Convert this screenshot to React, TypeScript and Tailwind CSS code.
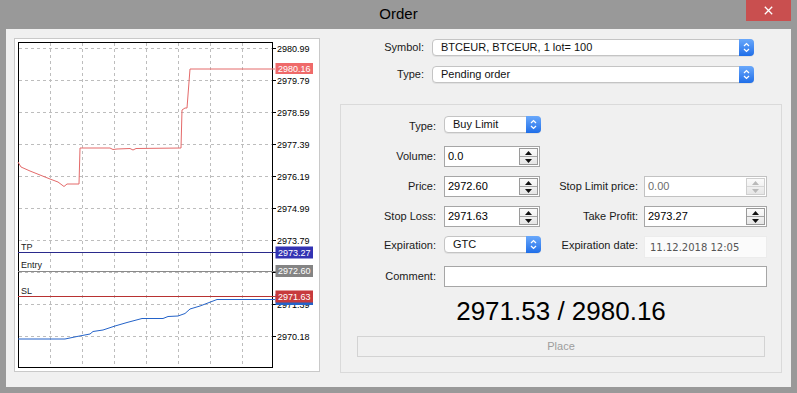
import React from "react";

const ui = "font-['Liberation_Sans',Arial,sans-serif]";

const axisLabels = [
  "2980.99",
  "2979.79",
  "2978.59",
  "2977.39",
  "2976.19",
  "2974.99",
  "2973.79",
  "2972.59",
  "2971.39",
  "2970.18",
];
const gridX = [50.5, 82.5, 114.5, 146.5, 178.5, 210.5, 242.5];

const askPath =
  "M18,162 L21,167 L30,171 L40,175 L50,179 L58,182 L64,186.5 L67,184 L79,184 L80,148 L110,148 L113,149.5 L117,149 L130,148.5 L133,150 L136,148.5 L181,148 L182,110 L185,108 L187,108 L190,69 L275,69";
const bidPath =
  "M18,339 L65,339 L77,336.5 L90,334 L93,331.5 L103,330 L115,326 L127,322.5 L142,318.5 L163,318.5 L168,316.5 L178,316 L185,313.5 L190,309 L200,306 L217,299.5 L275,299.5";

// chart drawn in page coordinates through the viewBox
const Chart = () => (
  <div className="w-[306px] h-[334px] shrink-0 border border-[#c9c9c9] bg-white">
    <svg
      width={304}
      height={332}
      viewBox="15 39 304 332"
      fontFamily="'Liberation Sans', Arial, sans-serif"
      className="block"
    >
      {gridX.map((x) => (
        <line key={x} x1={x} y1={43} x2={x} y2={367} stroke="#bdbdbd" strokeDasharray="3 3" />
      ))}
      {axisLabels.map((_, i) => (
        <line
          key={i}
          x1={19}
          y1={48.5 + i * 32}
          x2={272}
          y2={48.5 + i * 32}
          stroke="#bdbdbd"
          strokeDasharray="3 3"
        />
      ))}
      <rect x={18.5} y={42.5} width={254} height={325} fill="none" stroke="#000" />
      {axisLabels.map((v, i) => (
        <g key={v}>
          <line x1={272.5} y1={48.5 + i * 32} x2={276} y2={48.5 + i * 32} stroke="#000" />
          <text x={277} y={48.5 + i * 32 + 3.3} fontSize={9} fill="#000">
            {v}
          </text>
        </g>
      ))}

      {/* ask */}
      <path d={askPath} fill="none" stroke="#e46a6a" strokeWidth={1} />
      <rect x={275.5} y={63} width={37.5} height={11} fill="#ef6a6a" />
      <text x={278} y={71.8} fontSize={9} fill="#fff">
        2980.16
      </text>

      {/* TP */}
      <line x1={18} y1={252.5} x2={276} y2={252.5} stroke="#2a2a8c" />
      <rect x={275.5} y={246.5} width={37.5} height={12} fill="#3333b3" />
      <text x={278} y={255.8} fontSize={9} fill="#fff">
        2973.27
      </text>
      <text x={21} y={249.5} fontSize={9} fill="#222">
        TP
      </text>

      {/* Entry */}
      <line x1={18} y1={271.5} x2={276} y2={271.5} stroke="#8a8a8a" />
      <rect x={275.5} y={265} width={37.5} height={12} fill="#848484" />
      <text x={278} y={274.3} fontSize={9} fill="#fff">
        2972.60
      </text>
      <text x={21} y={268} fontSize={9} fill="#222">
        Entry
      </text>

      {/* bid */}
      <path d={bidPath} fill="none" stroke="#2463c9" strokeWidth={1} />
      <rect x={275.5} y={294} width={37.5} height={11} fill="#2463c9" />

      {/* SL */}
      <line x1={18} y1={296.5} x2={276} y2={296.5} stroke="#b83232" />
      <rect x={275.5} y={290.5} width={37.5} height={12} fill="#c73a3d" />
      <text x={278} y={299.8} fontSize={9} fill="#fff">
        2971.63
      </text>
      <text x={21} y={294} fontSize={9} fill="#222">
        SL
      </text>
    </svg>
  </div>
);

const Chevrons = () => (
  <svg width="15" height="15" viewBox="0 0 15 15">
    <path d="M5 6 L7.5 3.6 L10 6" fill="none" stroke="#fff" strokeWidth="1.3" />
    <path d="M5 9 L7.5 11.4 L10 9" fill="none" stroke="#fff" strokeWidth="1.3" />
  </svg>
);

const MacSelect = ({ value, width }: { value: string; width: string }) => (
  <div
    className={`${width} h-[17px] flex rounded-[4px] border border-[#c4c4c4] bg-white shadow-[0_1px_0_rgba(0,0,0,0.06)]`}
  >
    <div className="flex-1 pl-[8px] text-[11px] leading-[15px] text-[#111] truncate">{value}</div>
    <div className="w-[15px] -my-px -mr-px rounded-r-[4px] bg-gradient-to-b from-[#69a8fb] to-[#1e6ee8] flex items-center justify-center">
      <Chevrons />
    </div>
  </div>
);

const Spinner = ({ disabled }: { disabled?: boolean }) => {
  const c = disabled ? "#b9b9b9" : "#111";
  return (
    <div
      className={`w-[19px] h-[17px] mr-px flex flex-col border ${
        disabled ? "border-[#cfcfcf]" : "border-[#9a9a9a]"
      } bg-gradient-to-b from-[#fbfbfb] to-[#e6e6e6]`}
    >
      <div className={`flex-1 flex items-center justify-center border-b ${disabled ? "border-[#d6d6d6]" : "border-[#a5a5a5]"}`}>
        <svg width="7" height="4" viewBox="0 0 7 4">
          <path d="M0 4 L3.5 0 L7 4 Z" fill={c} />
        </svg>
      </div>
      <div className="flex-1 flex items-center justify-center">
        <svg width="7" height="4" viewBox="0 0 7 4">
          <path d="M0 0 L3.5 4 L7 0 Z" fill={c} />
        </svg>
      </div>
    </div>
  );
};

const SpinInput = ({ value, width, disabled }: { value: string; width: string; disabled?: boolean }) => (
  <div
    className={`${width} h-[21px] flex items-center border ${
      disabled ? "border-[#c2c2c2]" : "border-[#a6a6a6]"
    } bg-white`}
  >
    <div className={`flex-1 pl-[3px] text-[11px] ${disabled ? "text-[#6d6d6d]" : "text-[#000]"}`}>{value}</div>
    <Spinner disabled={disabled} />
  </div>
);

const Label = ({ children, width }: { children: React.ReactNode; width: string }) => (
  <div className={`${width} shrink-0 text-right text-[11px] text-[#1a1a1a]`}>{children}</div>
);

export default function App() {
  return (
    <div className={`w-[797px] h-[393px] bg-[#999999] flex flex-col ${ui}`}>
      {/* title bar */}
      <div className="relative h-[29px] shrink-0 flex items-center justify-center">
        <span className="text-[15px] text-black">Order</span>
        <div className="absolute right-[6px] top-0 w-[45px] h-[21px] bg-[#c94f4f] flex items-center justify-center">
          <svg width="9" height="9" viewBox="0 0 9 9">
            <path d="M0.8 0.8 L8.2 8.2 M8.2 0.8 L0.8 8.2" stroke="#fff" strokeWidth="1.3" />
          </svg>
        </div>
      </div>

      <div className="mx-[6px] mb-[6px] flex-1 bg-[#f0f0f0] flex pt-[9px] pl-[8px]">
        <Chart />

        <div className="ml-[20px] w-[442px] flex flex-col pt-px">
          <div className="flex items-center gap-[8px] h-[17px]">
            <Label width="w-[84px]">Symbol:</Label>
            <MacSelect value="BTCEUR, BTCEUR, 1 lot= 100" width="w-[322px]" />
          </div>
          <div className="flex items-center gap-[8px] h-[17px] mt-[10px]">
            <Label width="w-[84px]">Type:</Label>
            <MacSelect value="Pending order" width="w-[322px]" />
          </div>

          {/* group box */}
          <div className="mt-[21px] border border-[#dadada] bg-[#f0f0f0] flex flex-col pt-[11px] pb-[15px]">
            <div className="flex flex-col gap-[9px]">
              <div className="h-[21px] flex items-start">
                <Label width="w-[95px]">
                  <span className="leading-[21px]">Type:</span>
                </Label>
                <div className="ml-[8px]">
                  <MacSelect value="Buy Limit" width="w-[97px]" />
                </div>
              </div>

              <div className="h-[21px] flex items-center">
                <Label width="w-[95px]">Volume:</Label>
                <div className="ml-[8px]">
                  <SpinInput value="0.0" width="w-[96px]" />
                </div>
              </div>

              <div className="h-[21px] flex items-center">
                <Label width="w-[95px]">Price:</Label>
                <div className="ml-[8px]">
                  <SpinInput value="2972.60" width="w-[96px]" />
                </div>
                <Label width="w-[98px]">Stop Limit price:</Label>
                <div className="ml-[6px]">
                  <SpinInput value="0.00" width="w-[123px]" disabled />
                </div>
              </div>

              <div className="h-[21px] flex items-center">
                <Label width="w-[95px]">Stop Loss:</Label>
                <div className="ml-[8px]">
                  <SpinInput value="2971.63" width="w-[96px]" />
                </div>
                <Label width="w-[98px]">Take Profit:</Label>
                <div className="ml-[6px]">
                  <SpinInput value="2973.27" width="w-[123px]" />
                </div>
              </div>

              <div className="h-[21px] flex items-start">
                <Label width="w-[95px]">
                  <span className="leading-[19px]">Expiration:</span>
                </Label>
                <div className="ml-[8px] w-[96px]">
                  <MacSelect value="GTC" width="w-[97px]" />
                </div>
                <Label width="w-[98px]">
                  <span className="leading-[19px]">Expiration date:</span>
                </Label>
                <div className="ml-[6px] w-[123px] h-[22px] bg-[#fbfbfb] border border-[#ececec] pl-[5px] flex items-center text-[10px] text-[#555] font-['DejaVu_Sans',sans-serif]">
                  11.12.2018 12:05
                </div>
              </div>

              <div className="h-[21px] flex items-center">
                <Label width="w-[95px]">Comment:</Label>
                <div className="ml-[8px] w-[323px] h-[21px] border border-[#a6a6a6] bg-white" />
              </div>
            </div>

            <div className="mt-[9px] h-[30px] leading-[30px] text-center text-[26px] text-black">
              2971.53 / 2980.16
            </div>

            <div className="mt-[10px] mx-[16px] h-[21px] border border-[#d3d3d3] bg-[#f0f0f0] flex items-center justify-center text-[11px] text-[#9d9d9d]">
              Place
            </div>
          </div>
        </div>
      </div>
    </div>
  );
}
